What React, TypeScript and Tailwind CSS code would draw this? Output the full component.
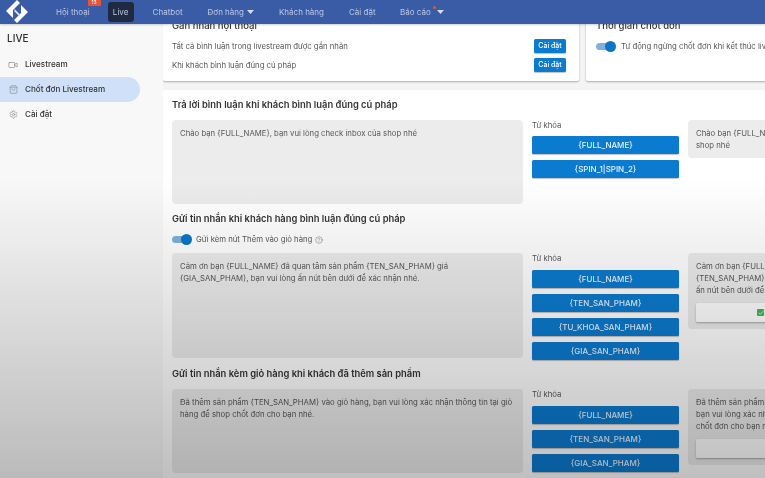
import React from 'react';
import { Video, ShoppingBag, Settings, CircleHelp, Check } from 'lucide-react';

const Caret = () => (
  <svg width="7" height="4" viewBox="0 0 7 4" className="ml-[3px]">
    <path d="M0 0h7L3.5 4z" fill="#d5def0" />
  </svg>
);

const Toggle = () => (
  <div className="relative w-[20px] h-[11px] shrink-0">
    <div className="absolute left-0 top-[2px] w-[18px] h-[7px] rounded-full bg-[#7fb1dc]" />
    <div className="absolute right-0 top-0 w-[11px] h-[11px] rounded-full bg-[#0b76c5]" />
  </div>
);

const Header = () => (
  <header className="relative z-10 h-[24px] shrink-0 bg-[#3a5ba6] flex items-center text-[8px] text-[#bcc9e3] shadow-[0_1px_2px_rgba(0,0,0,0.2)] whitespace-nowrap">
    <svg width="26" height="24" viewBox="0 0 26 24" className="ml-[4px] shrink-0">
      <path d="M13 0 L2 11 L9 18 L9 10 L16 3 Z" fill="#fff" />
      <path d="M13 23 L24 12 L17 5 L17 13 L10 20 Z" fill="#fff" />
      <path d="M10.5 9 L16 14.5 L16 17 L10.5 11.5 Z" fill="#dfe6f4" />
    </svg>
    <span className="ml-[26px] relative">
      Hội thoại
      <span className="absolute -right-[11px] -top-[7px] w-[13px] h-[7px] rounded-[1px] bg-[#e8543a] text-white text-[5px] leading-[7px] text-center">13</span>
    </span>
    <span className="ml-[18px] w-[26px] h-[20px] rounded-[3px] bg-[#1f2a40] flex items-center justify-center">Live</span>
    <span className="ml-[19px]">Chatbot</span>
    <span className="ml-[25px] flex items-center">Đơn hàng<Caret /></span>
    <span className="ml-[25px] w-[44px]">Khách hàng</span>
    <span className="ml-[26px] w-[26px]">Cài đặt</span>
    <span className="ml-[25px] flex items-center relative">
      Báo cáo
      <span className="absolute right-[8px] top-[0px] w-[3px] h-[3px] rounded-full bg-[#e8543a]" />
      <span className="ml-[3px]"><Caret /></span>
    </span>
  </header>
);

const Sidebar = () => (
  <aside className="w-[163px] shrink-0 bg-[#f8f8f8] pr-[23px] text-[8.1px] font-medium text-[#333]">
    <div className="pl-[7px] pt-[8px] h-[28px] text-[10px] font-medium leading-[13px] text-[#2c2c2c]">LIVE</div>
    <div className="h-[25px] flex items-center pl-[8px] gap-[7px]">
      <Video size={10} strokeWidth={1.2} className="text-[#666]" />
      Livestream
    </div>
    <div className="h-[25px] flex items-center pl-[9px] gap-[7px] rounded-r-full bg-[#cfe0f8]">
      <ShoppingBag size={9} strokeWidth={1.2} className="text-[#666]" />
      Chốt đơn Livestream
    </div>
    <div className="h-[25px] flex items-center pl-[9px] gap-[7px]">
      <Settings size={9} strokeWidth={1.2} className="text-[#666]" />
      Cài đặt
    </div>
  </aside>
);

const Btn = ({ children }: { children: React.ReactNode }) => (
  <div className="w-[32px] h-[14px] rounded-[1.5px] bg-[#0b7bd0] text-white text-[7px] font-medium flex items-center justify-center shadow-[0_1px_1px_rgba(0,0,0,0.25)]">
    {children}
  </div>
);

const Keywords = ({ items, labelH }: { items: string[]; labelH: string }) => (
  <div className="w-[147px] shrink-0">
    <div className={`${labelH} text-[7.75px] leading-[11px] text-[#555]`}>Từ khóa</div>
    <div className="flex flex-col gap-[6px]">
      {items.map((k) => (
        <div key={k} className="h-[18px] rounded-[1.5px] bg-[#0b7bd0] text-[#e8f2fb] text-[8px] font-medium flex items-center justify-center shadow-[0_1px_1px_rgba(0,0,0,0.25)]">
          {k}
        </div>
      ))}
    </div>
  </div>
);

const Row = ({
  text, keywords, preview, button, h, labelH,
}: { text: string; keywords: string[]; preview: React.ReactNode; button?: React.ReactNode; h: string; labelH: string }) => (
  <div className="flex gap-[9px]">
    <div className={`w-[351px] ${h} shrink-0 rounded-[4px] bg-[#ececec] px-[8px] pt-[7px] text-[7.75px] leading-[12px] text-[#555]`}>{text}</div>
    <Keywords items={keywords} labelH={labelH} />
    <div className="w-[240px] shrink-0 self-start rounded-[4px] bg-[#ececec] px-[8px] pt-[7px] pb-[7px] text-[7.75px] leading-[12px] text-[#555] whitespace-nowrap">
      {preview}
      {button}
    </div>
  </div>
);

const CartBtn = ({ check }: { check?: boolean }) => (
  <div className="mt-[7px] h-[19px] rounded-[1.5px] bg-white shadow-[0_1px_2px_rgba(0,0,0,0.3)] flex items-center pl-[61px]">
    {check && (
      <span className="w-[7px] h-[7px] rounded-[1px] bg-[#3dbb4e] flex items-center justify-center">
        <Check size={6} strokeWidth={3} className="text-white" />
      </span>
    )}
  </div>
);

const Title = ({ children }: { children: React.ReactNode }) => (
  <h3 className="text-[9.4px] leading-[14px] font-semibold text-[#333]">{children}</h3>
);

export default function App() {
  return (
    <div className="relative w-[765px] h-[478px] overflow-hidden bg-[#f4f4f4] flex flex-col blur-[0.5px]" style={{ fontFamily: 'Inter, "Noto Sans", sans-serif' }}>
      <Header />
      <div className="flex flex-1 min-h-0">
        <Sidebar />
        <main className="flex-1 min-w-0 overflow-hidden">
          <div className="flex gap-[7px] -mt-[3px]">
            <section className="w-[416px] h-[60px] shrink-0 bg-white rounded-b-[2px] shadow-[0_1px_2px_rgba(0,0,0,0.3)] pl-[9px] pr-[13px]">
              <div className="text-[9.5px] leading-[10px] font-medium text-[#333]">Gán nhãn hội thoại</div>
              <div className="mt-[8px] h-[14px] flex items-center justify-between text-[7.75px] text-[#555]">
                <span className="pt-[1px]">Tất cả bình luận trong livestream được gắn nhãn</span><Btn>Cài đặt</Btn>
              </div>
              <div className="mt-[5px] h-[14px] flex items-center justify-between text-[7.75px] text-[#555]">
                <span className="pt-[1px]">Khi khách bình luận đúng cú pháp</span><Btn>Cài đặt</Btn>
              </div>
            </section>
            <section className="w-[200px] h-[60px] shrink-0 bg-white rounded-b-[2px] shadow-[0_1px_2px_rgba(0,0,0,0.3)] pl-[10px]">
              <div className="text-[9.5px] leading-[10px] font-medium text-[#333]">Thời gian chốt đơn</div>
              <div className="mt-[8px] h-[14px] flex items-center gap-[5px] text-[7.75px] text-[#555] whitespace-nowrap">
                <Toggle />
                <span className="pt-[1px]">Tự động ngừng chốt đơn khi kết thúc livestream</span>
              </div>
            </section>
          </div>
          <section className="mt-[9px] w-[640px] bg-white pl-[9px] pt-[8px] h-[400px]">
            <Title>Trả lời bình luận khi khách bình luận đúng cú pháp</Title>
            <div className="mt-[8px]">
              <Row
                h="h-[84px]"
                labelH="h-[16px]"
                text="Chào bạn {FULL_NAME}, bạn vui lòng check inbox của shop nhé"
                keywords={['{FULL_NAME}', '{SPIN_1|SPIN_2}']}
                preview={<>Chào bạn {'{FULL_NAME}'}, bạn vui lòng check inbox của<br />shop nhé</>}
              />
            </div>
            <div className="mt-[8px]"><Title>Gửi tin nhắn khi khách hàng bình luận đúng cú pháp</Title></div>
            <div className="mt-[8px] h-[11px] flex items-center gap-[3px] text-[7.75px] text-[#555]">
              <Toggle />
              <span className="ml-[1px]">Gửi kèm nút Thêm vào giỏ hàng</span>
              <CircleHelp size={8} strokeWidth={1.2} />
            </div>
            <div className="mt-[8px]">
              <Row
                h="h-[105px]"
                labelH="h-[17px]"
                text="Cảm ơn bạn {FULL_NAME} đã quan tâm sản phẩm {TEN_SAN_PHAM} giá {GIA_SAN_PHAM}, bạn vui lòng ấn nút bên dưới để xác nhận nhé."
                keywords={['{FULL_NAME}', '{TEN_SAN_PHAM}', '{TU_KHOA_SAN_PHAM}', '{GIA_SAN_PHAM}']}
                preview={<>Cảm ơn bạn {'{FULL_NAME}'} đã quan tâm sản phẩm<br />{'{TEN_SAN_PHAM}'} giá {'{GIA_SAN_PHAM}'}, bạn vui lòng<br />ấn nút bên dưới để xác nhận nhé.</>}
                button={<CartBtn check />}
              />
            </div>
            <div className="mt-[7px]"><Title>Gửi tin nhắn kèm giỏ hàng khi khách đã thêm sản phẩm</Title></div>
            <div className="mt-[8px]">
              <Row
                h="h-[84px]"
                labelH="h-[17px]"
                text="Đã thêm sản phẩm {TEN_SAN_PHAM} vào giỏ hàng, bạn vui lòng xác nhận thông tin tại giỏ hàng để shop chốt đơn cho bạn nhé."
                keywords={['{FULL_NAME}', '{TEN_SAN_PHAM}', '{GIA_SAN_PHAM}']}
                preview={<>Đã thêm sản phẩm {'{TEN_SAN_PHAM}'} vào giỏ hàng,<br />bạn vui lòng xác nhận thông tin tại giỏ hàng để shop<br />chốt đơn cho bạn nhé.</>}
                button={<CartBtn />}
              />
            </div>
          </section>
        </main>
      </div>
      {/* video fade that darkens the lower part of the frame */}
      <div className="absolute inset-x-0 bottom-0 h-[300px] z-20 pointer-events-none bg-gradient-to-b from-transparent to-black/25" />
    </div>
  );
}
